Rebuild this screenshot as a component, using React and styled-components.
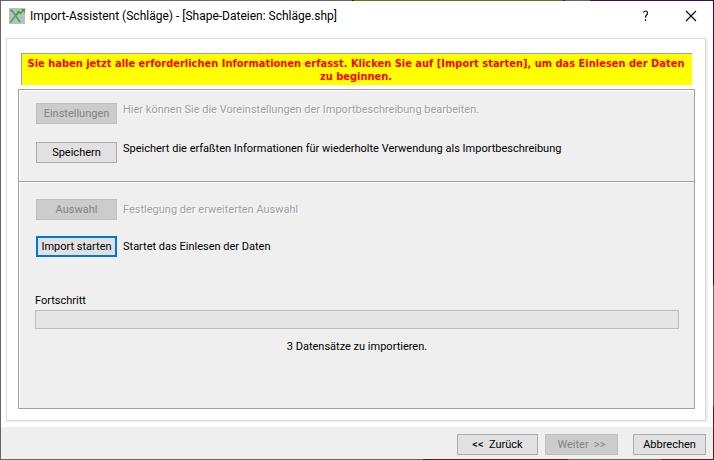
import styled, { createGlobalStyle } from "styled-components";

function App() {
  return (
    <>
      <GlobalStyle />
      <Dialog>
        <TitleBar>
          <AppIcon viewBox="0 0 16 16" aria-hidden="true">
            <rect width="16" height="16" fill="#b4bfc6" />
            <path
              d="M1 2.500 H3 L11 14 M1 14.500 L9 5"
              fill="none"
              stroke="#4aa53a"
              strokeWidth="1.500"
            />
            <path
              d="M7.500 6.500 L9.500 3.500 L11.500 5.500 L14 2.500"
              fill="none"
              stroke="#38a820"
              strokeWidth="1.500"
            />
            <path d="M12 1 H16 V5 Z" fill="#38a820" />
          </AppIcon>
          <Title>Import-Assistent (Schläge) - [Shape-Dateien: Schläge.shp]</Title>
          <TitleButton type="button" aria-label="Hilfe">
            <svg width="12" height="12" viewBox="0 0 12 12">
              <path
                d="M3.500 2.500 Q4 1 5.500 1 Q7.500 1 7.500 3 Q7.500 4.200 6.300 5.200 Q5.500 6 5.500 7.800 M5.500 9.300 V11"
                fill="none"
                stroke="#000"
                strokeWidth="1.200"
              />
            </svg>
          </TitleButton>
          <TitleButton type="button" aria-label="Schließen">
            <svg width="12" height="12" viewBox="0 0 12 12">
              <path d="M1 1 L11 11 M11 1 L1 11" stroke="#000" strokeWidth="1.100" />
            </svg>
          </TitleButton>
        </TitleBar>

        <Page>
          <Frame>
            <Notice>
              Sie haben jetzt alle erforderlichen Informationen erfasst. Klicken
              Sie auf [Import starten], um das Einlesen der Daten zu beginnen.
            </Notice>
            <Panel>
              <Section>
                <Rows $gap={18}>
                  <Row>
                    <Button type="button" disabled>Einstellungen</Button>
                    <Hint $disabled $top>
                      Hier können Sie die Voreinstellungen der
                      Importbeschreibung bearbeiten.
                    </Hint>
                  </Row>
                  <Row>
                    <Button type="button">Speichern</Button>
                    <Hint $top>
                      Speichert die erfaßten Informationen für wiederholte
                      Verwendung als Importbeschreibung
                    </Hint>
                  </Row>
                </Rows>
              </Section>
              <Section>
                <Rows $gap={16}>
                  <Row>
                    <Button type="button" disabled>Auswahl</Button>
                    <Hint $disabled>Festlegung der erweiterten Auswahl</Hint>
                  </Row>
                  <Row>
                    <Button type="button" $focused>Import starten</Button>
                    <Hint>Startet das Einlesen der Daten</Hint>
                  </Row>
                </Rows>
                <Progress>
                  <label htmlFor="progress">Fortschritt</label>
                  <Bar id="progress" value="0" max="3" />
                  <Status>3 Datensätze zu importieren.</Status>
                </Progress>
              </Section>
            </Panel>
          </Frame>
        </Page>

        <Footer>
          <Button type="button">&lt;&lt;&nbsp; Zurück</Button>
          <Button type="button" $small disabled>Weiter&nbsp; &gt;&gt;</Button>
          <Cancel type="button" $small>Abbrechen</Cancel>
        </Footer>
      </Dialog>
    </>
  );
}

export default App;

const GlobalStyle = createGlobalStyle`
  * {
    box-sizing: border-box;
  }
  body {
    margin: 0;
    color: #000;
    font-family: Roboto, sans-serif;
    font-size: 11px;
    line-height: 13px;
  }
`;

const Dialog = styled.main`
  display: flex;
  flex-direction: column;
  min-height: 100vh;
  padding: 1px;
  background:
    linear-gradient(90deg, #666 352px, #1c1c60 352px 354px, #707018 354px 563px, #1c1c60 563px 565px, #666 565px 590px, #401040 590px) top / 100% 1px no-repeat,
    linear-gradient(90deg, #666 423px, #1c1c60 423px 425px, #5c1a20 425px 568px, #666 568px 661px, #5c1a20 661px) bottom / 100% 1px no-repeat,
    linear-gradient(#301038 283px, #1c1c80 283px 285px, #666 285px 406px, #5c1a20 406px) right / 1px 100% no-repeat,
    #666;
`;

const TitleBar = styled.header`
  display: flex;
  align-items: center;
  height: 29px;
  padding-left: 8px;
  background: #fff;
`;

const AppIcon = styled.svg`
  width: 16px;
  height: 16px;
`;

const Title = styled.h1`
  flex: 1;
  margin: 0 0 0 5px;
  font-size: 12px;
  font-weight: 400;
  line-height: 16px;
`;

const TitleButton = styled.button`
  display: flex;
  align-items: center;
  justify-content: center;
  width: 45px;
  height: 29px;
  padding: 0;
  border: 0;
  background: transparent;
`;

const Page = styled.section`
  flex: 1;
  display: flex;
  padding: 8px 7px 6px 5px;
  background: #fff;
`;

const Frame = styled.div`
  flex: 1;
  display: flex;
  flex-direction: column;
  padding: 14px 10px 11px 11px;
  border: 1px solid #d9d9d9;
  box-shadow: 1px 1px #efefef, 2px 1px #efefef;
`;

const Notice = styled.p`
  margin: 0 3px 4px;
  padding: 3px 5px 2px 3px;
  border: 1px solid #a0a0a0;
  border-width: 1px 0 0 1px;
  background: #ff0;
  color: #f00;
  font-family: "DejaVu Sans Condensed", "DejaVu Sans", sans-serif;
  font-weight: 700;
  text-align: center;
`;

const Panel = styled.div`
  flex: 1;
  border: 1px solid #a0a0a0;
  background: #efefef;
  box-shadow: inset 1px 1px #fff;
`;

const Section = styled.section`
  padding: 13px 15px 18px 16px;
  & + & {
    padding-top: 17px;
    border-top: 1px solid #a0a0a0;
    box-shadow: inset 0 1px #fff;
  }
`;

const Rows = styled.div`
  display: flex;
  flex-direction: column;
  gap: ${(props) => props.$gap}px;
  padding-left: 1px;
`;

const Row = styled.div`
  display: flex;
  align-items: center;
  gap: 6px;
`;

const Hint = styled.span`
  align-self: ${(props) => (props.$top ? "flex-start" : "center")};
  color: ${(props) => (props.$disabled ? "#a0a0a0" : "#000")};
  text-shadow: ${(props) => (props.$disabled ? "1px 1px #fff" : "none")};
`;

const Button = styled.button`
  width: ${(props) => (props.$small ? 73 : 81)}px;
  height: 21px;
  padding: 0;
  border: ${(props) => (props.$focused ? "2px solid #0078d7" : "1px solid #adadad")};
  background: #e1e1e1;
  color: #000;
  font: inherit;
  &:disabled {
    border-color: #bfbfbf;
    background: #ccc;
    color: #838383;
  }
`;

const Cancel = styled(Button)`
  margin-left: 8px;
`;

const Progress = styled.div`
  display: flex;
  flex-direction: column;
  margin-top: 37px;
`;

const Bar = styled.progress`
  appearance: none;
  width: 100%;
  height: 19px;
  margin-top: 3px;
  border: 1px solid #bcbcbc;
  background: #e6e6e6;
  &::-webkit-progress-bar {
    background: #e6e6e6;
  }
`;

const Status = styled.span`
  margin-top: 11px;
  text-align: center;
`;

const Footer = styled.footer`
  display: flex;
  justify-content: flex-end;
  gap: 7px;
  padding: 7px 7px 4px;
  background: #efefef;
`;
